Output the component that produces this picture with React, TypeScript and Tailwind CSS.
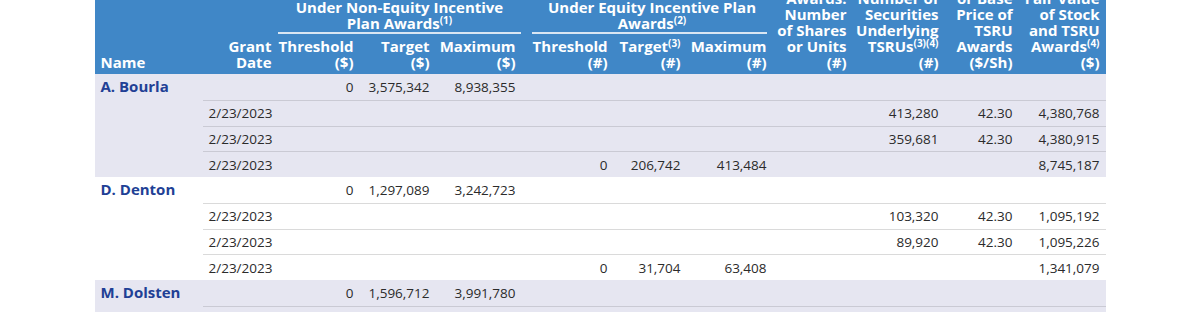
import React from 'react'

// column widths after the Name column (Grant Date ... Fair Value)
const W = [
  'w-[75px]', 'w-[82px]', 'w-[76px]', 'w-[86px]', 'w-[92px]', 'w-[73px]',
  'w-[86px]', 'w-[80px]', 'w-[92px]', 'w-[74px]', 'w-[87px]',
]

type Row = string[] // 11 values: date + 10 numbers

const GROUPS: { name: string; shaded: boolean; rows: Row[] }[] = [
  {
    name: 'A. Bourla',
    shaded: true,
    rows: [
      ['', '0', '3,575,342', '8,938,355', '', '', '', '', '', '', ''],
      ['2/23/2023', '', '', '', '', '', '', '', '413,280', '42.30', '4,380,768'],
      ['2/23/2023', '', '', '', '', '', '', '', '359,681', '42.30', '4,380,915'],
      ['2/23/2023', '', '', '', '0', '206,742', '413,484', '', '', '', '8,745,187'],
    ],
  },
  {
    name: 'D. Denton',
    shaded: false,
    rows: [
      ['', '0', '1,297,089', '3,242,723', '', '', '', '', '', '', ''],
      ['2/23/2023', '', '', '', '', '', '', '', '103,320', '42.30', '1,095,192'],
      ['2/23/2023', '', '', '', '', '', '', '', '89,920', '42.30', '1,095,226'],
      ['2/23/2023', '', '', '', '0', '31,704', '63,408', '', '', '', '1,341,079'],
    ],
  },
  {
    name: 'M. Dolsten',
    shaded: true,
    rows: [
      ['', '0', '1,596,712', '3,991,780', '', '', '', '', '', '', ''],
      ['2/23/2023', '', '', '', '', '', '', '', '', '', ''],
    ],
  },
]

function Sub({ children }: { children: React.ReactNode }) {
  return <sup className="text-[10px]">{children}</sup>
}

function Header() {
  return (
    <div className="flex h-[74px] items-end overflow-hidden bg-[#4087c7] text-[15px] font-bold leading-4 text-white whitespace-nowrap">
      <div className="w-[108px] pb-1 pl-[6px]">Name</div>
      <div className="w-[75px] pb-1 pr-[6px] text-right">Grant<br />Date</div>

      {/* non-equity group */}
      <div className="w-[244px]">
        <div className="text-center">
          Estimated Possible Payouts<br />Under Non-Equity Incentive<br />Plan Awards<Sub>(1)</Sub>
        </div>
        <div className="mr-px mt-px h-[2px] bg-[#d9e6f3]" />
        <div className="mt-1 flex pb-1 text-right">
          <div className="w-[82px] pr-[6px]">Threshold<br />($)</div>
          <div className="w-[76px] pr-[6px]">Target<br />($)</div>
          <div className="w-[86px] pr-[6px]">Maximum<br />($)</div>
        </div>
      </div>

      {/* equity group */}
      <div className="w-[251px]">
        <div className="pl-[10px] text-center">
          Estimated Future Payouts<br />Under Equity Incentive Plan<br />Awards<Sub>(2)</Sub>
        </div>
        <div className="ml-[10px] mr-[6px] mt-px h-[2px] bg-[#d9e6f3]" />
        <div className="mt-1 flex pb-1 text-right">
          <div className="w-[92px] pr-[6px]">Threshold<br />(#)</div>
          <div className="w-[73px] pr-[6px]">Target<Sub>(3)</Sub><br />(#)</div>
          <div className="w-[86px] pr-[6px]">Maximum<br />(#)</div>
        </div>
      </div>

      <div className="w-[80px] pb-1 pr-[6px] text-right">
        All Other<br />Stock<br />Awards:<br />Number<br />of Shares<br />or Units<br />(#)
      </div>
      <div className="w-[92px] pb-1 pr-[6px] text-right">
        All Other<br />Option<br />Awards:<br />Number of<br />Securities<br />Underlying<br />TSRUs<Sub>(3)(4)</Sub><br />(#)
      </div>
      <div className="w-[74px] pb-1 pr-[6px] text-right">
        Exercise<br />or Base<br />Price of<br />TSRU<br />Awards<br />($/Sh)
      </div>
      <div className="w-[87px] pb-1 pr-[6px] text-right">
        Grant Date<br />Fair Value<br />of Stock<br />and TSRU<br />Awards<Sub>(4)</Sub><br />($)
      </div>
    </div>
  )
}

export default function App() {
  return (
    <div className="h-[312px] overflow-hidden bg-white">
      <div className="mx-auto w-[1011px] font-['Open_Sans',sans-serif]">
        <Header />
        {GROUPS.map(g => (
          <div key={g.name} className={`flex ${g.shaded ? 'bg-[#e6e6f1]' : 'bg-white'}`}>
            <div className="w-[108px] pl-[6px] text-[15px] font-bold leading-[24px] text-[#213f95]">
              {g.name}
            </div>
            <div className="flex-1">
              {g.rows.map((r, i) => (
                <div
                  key={i}
                  className={`flex h-[25.75px] items-center text-[13.5px] text-[#2b2b2b] ${
                    i > 0 ? (g.shaded ? 'border-t border-[#cacad4]' : 'border-t border-[#dadada]') : ''
                  }`}
                >
                  {r.map((v, j) => (
                    <div
                      key={j}
                      className={`${W[j]} ${j === 0 ? 'pl-[6px] text-left' : 'pr-[6px] text-right'}`}
                    >
                      {v}
                    </div>
                  ))}
                </div>
              ))}
            </div>
          </div>
        ))}
      </div>
    </div>
  )
}
